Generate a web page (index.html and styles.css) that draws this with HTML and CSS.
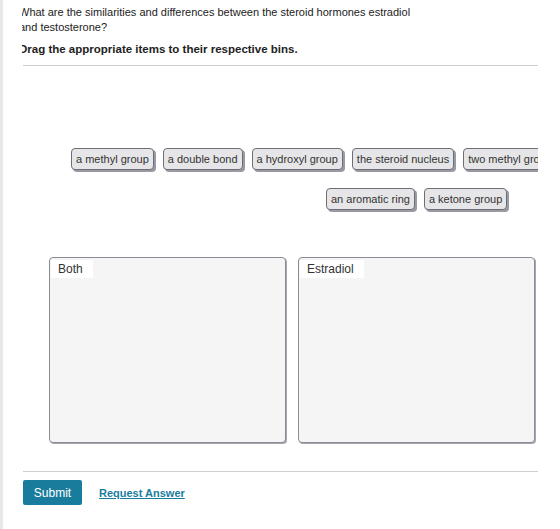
FILE: index.html
```html
<!DOCTYPE html>
<html lang="en">
<head>
    <meta charset="UTF-8">
    <title>Steroid Hormones</title>
    <link rel="stylesheet" href="styles.css">
</head>
<body>
    <div class="frame">
        <div class="panel">
            <!-- Question -->
            <p class="question">What are the similarities and differences between the steroid hormones estradiol and testosterone?</p>
            <p class="instruction">Drag the appropriate items to their respective bins.</p>
            <hr class="rule">

            <!-- Draggable items -->
            <div class="items">
                <div class="item-row first-row">
                    <div class="chip">a methyl group</div>
                    <div class="chip">a double bond</div>
                    <div class="chip">a hydroxyl group</div>
                    <div class="chip">the steroid nucleus</div>
                    <div class="chip">two methyl groups</div>
                </div>
                <div class="item-row second-row">
                    <div class="chip">an aromatic ring</div>
                    <div class="chip">a ketone group</div>
                </div>
            </div>

            <!-- Bins -->
            <div class="bins">
                <div class="bin"><span class="bin-label">Both</span></div>
                <div class="bin"><span class="bin-label">Estradiol</span></div>
                <div class="bin"><span class="bin-label">Testosterone</span></div>
            </div>

            <hr class="rule bottom-rule">
            <div class="actions">
                <button class="submit-btn">Submit</button>
                <a href="#" class="request-link">Request Answer</a>
            </div>
        </div>
    </div>
</body>
</html>
```

FILE: styles.css
```css
* {
    margin: 0;
    padding: 0;
    box-sizing: border-box;
    font-family: "Liberation Sans", Arial, sans-serif;
}

body {
    background: white;
    color: #333;
}

.frame {
    border-left: 3px solid #e8e8e8;
    height: 529px;
    padding-left: 19px;
}

.panel {
    width: 516px;
    overflow: hidden;
    padding-top: 5px;
}

.question {
    margin-left: -3px;
    width: 400px;
    font-size: 11px;
    line-height: 15px;
    color: #222;
}

.instruction {
    margin-left: -3px;
    margin-top: 7px;
    font-size: 11.5px;
    line-height: 15px;
    font-weight: bold;
    color: #222;
}

.rule {
    border: none;
    border-top: 1px solid #cfcfcf;
    margin-top: 8px;
    margin-left: 1px;
}

.items {
    margin-top: 82px;
}

.item-row {
    display: flex;
    gap: 9px;
    white-space: nowrap;
}

.first-row {
    margin-left: 49px;
}

.second-row {
    margin-left: 304px;
    margin-top: 18px;
}

.chip {
    flex-shrink: 0;
    height: 22px;
    line-height: 20px;
    padding: 0 4px;
    font-size: 11px;
    color: #333;
    background: #e6e6e8;
    border: 1px solid #6e6e78;
    border-radius: 4px;
    box-shadow: 2px 2px 0 #9a9aa4;
}

.bins {
    display: flex;
    gap: 12px;
    margin-top: 47px;
    margin-left: 27px;
}

.bin {
    flex-shrink: 0;
    width: 237px;
    height: 186px;
    background: #f5f5f6;
    border: 1px solid #8c8c96;
    border-radius: 4px;
    box-shadow: 1px 1px 0 #a6a6ae;
    padding: 1px;
}

.bin-label {
    display: inline-block;
    background: white;
    padding: 0 10px 0 7px;
    height: 18px;
    line-height: 18px;
    font-size: 12px;
    color: #333;
}

.bottom-rule {
    margin-top: 28px;
}

.actions {
    display: flex;
    align-items: center;
    gap: 17px;
    margin-top: 8px;
    margin-left: 1px;
}

.submit-btn {
    width: 59px;
    height: 25px;
    background: #1a7c9d;
    color: white;
    border: none;
    border-radius: 2px;
    font-size: 12px;
    cursor: pointer;
}

.request-link {
    font-size: 11px;
    font-weight: bold;
    color: #1a7c9d;
    text-decoration: underline;
}
```
